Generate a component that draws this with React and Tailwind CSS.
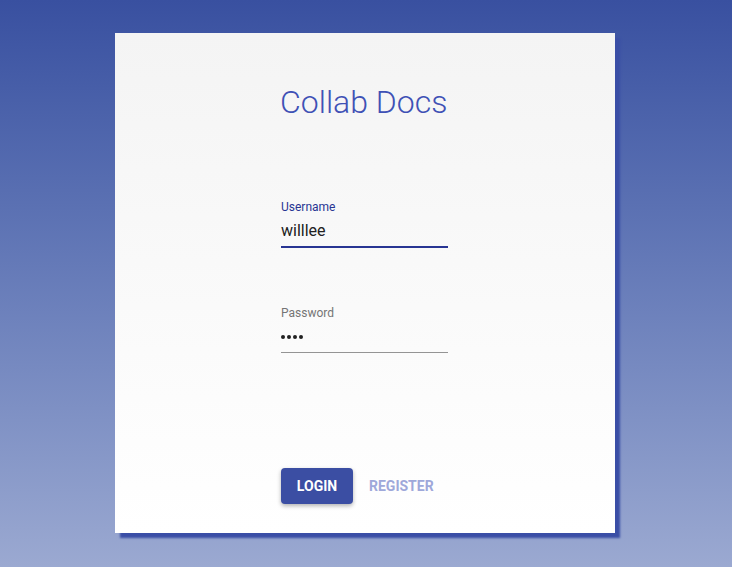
export default function App() {
  return (
    <div
      className="w-full h-[567px] flex items-start bg-gradient-to-b from-[#3950a0] to-[#9ba9d1]"
      style={{ fontFamily: "Roboto, 'Liberation Sans', sans-serif" }}
    >
      <div className="ml-[115px] mt-[33px] w-[500px] h-[500px] bg-gradient-to-b from-[#f4f4f4] to-[#ffffff] shadow-[5px_5px_2px_0_#3a4ea6] pt-[53px] pb-[29px] flex flex-col">
        <div className="w-[167px] ml-[166px] flex flex-col flex-1">
          <h1 className="text-[32px] leading-[32px] font-light text-[#3f51b5] whitespace-nowrap -ml-[1px]">
            Collab Docs
          </h1>
          <div className="mt-[81px] flex flex-col">
            <label className="text-[12px] leading-4 text-[#283593]">Username</label>
            <div className="mt-[1px] h-[32px] pt-[3px] border-b-2 border-[#283593] text-[16px] leading-6 text-[#212121]">
              willlee
            </div>
          </div>
          <div className="mt-[57px] flex flex-col">
            <label className="text-[12px] leading-4 text-[#757575]">Password</label>
            <div className="mt-[1px] h-[31px] border-b border-[#949494] text-[16px] leading-6 text-[#212121] flex items-center">
              <span className="flex gap-[2px]">
                <span className="w-[4px] h-[4px] rounded-full bg-[#212121]"></span>
                <span className="w-[4px] h-[4px] rounded-full bg-[#212121]"></span>
                <span className="w-[4px] h-[4px] rounded-full bg-[#212121]"></span>
                <span className="w-[4px] h-[4px] rounded-full bg-[#212121]"></span>
              </span>
            </div>
          </div>
          <div className="mt-auto flex items-center">
            <button className="w-[72px] h-[36px] rounded-[4px] bg-[#3b4ea3] text-white text-[14px] font-bold shadow-[0_2px_4px_rgba(0,0,0,0.3)]">
              LOGIN
            </button>
            <button className="ml-[16px] h-[36px] text-[#9fa8da] text-[14px] font-bold">
              REGISTER
            </button>
          </div>
        </div>
      </div>
    </div>
  );
}
